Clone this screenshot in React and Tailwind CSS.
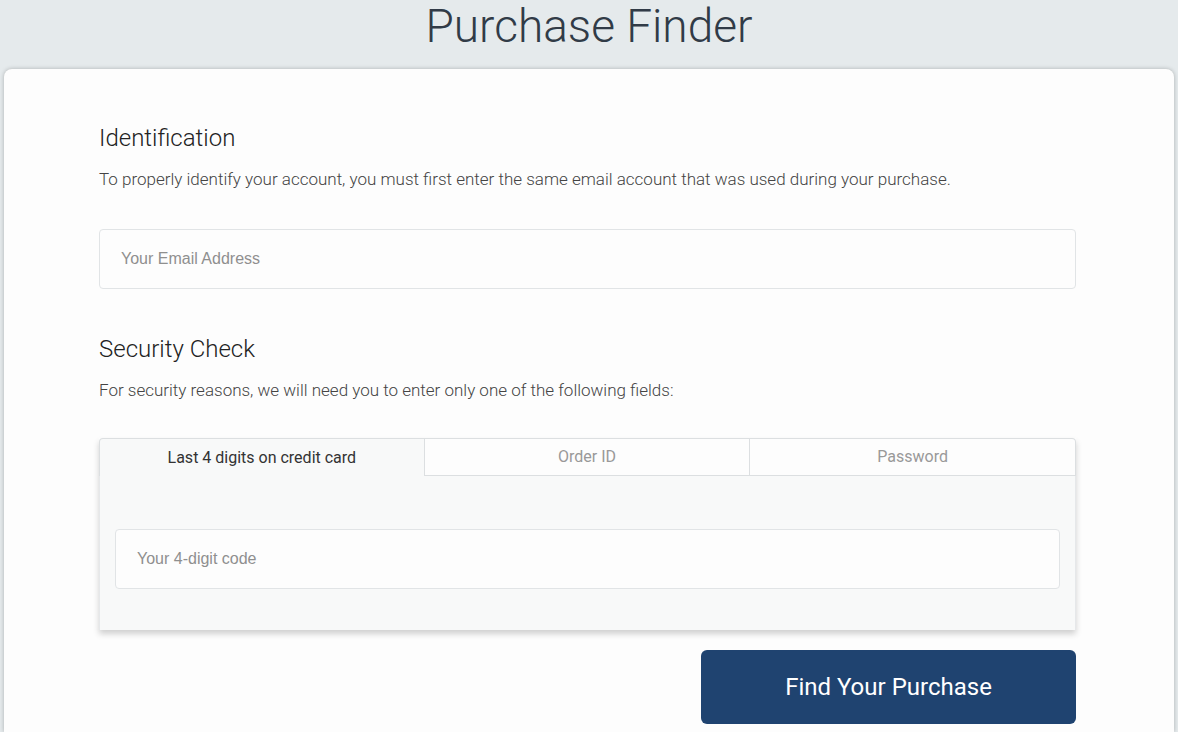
import React, { useState } from 'react';

const tabs = ['Last 4 digits on credit card', 'Order ID', 'Password'];

export default function App() {
  const [active, setActive] = useState(0);

  return (
    <div className="h-[732px] overflow-hidden bg-[#e5eaec] font-[Roboto,sans-serif] font-light text-[#2f3a44]">
      <h1 className="pt-[1px] text-center text-[46px] leading-[50px] font-light text-[#313b47]">Purchase Finder</h1>
      <div className="mx-[4px] mt-[18px] h-[663px] rounded-t-lg bg-[#fdfdfd] px-[95px] pt-[52px] shadow-[0_0_4px_rgba(0,0,0,0.25)]">
        <div className="w-[977px]">
          <h2 className="text-[24px] leading-[34px] font-light text-[#222]">Identification</h2>
          <p className="mt-[12px] text-[17px] leading-[24px] text-[#444]">
            To properly identify your account, you must first enter the same email account that was used during your purchase.
          </p>
          <input
            className="mt-[38px] h-[60px] w-full rounded border border-[#e1e4e6] bg-[#fdfdfd] px-[21px] font-[Liberation_Sans,sans-serif] text-[16px] font-normal outline-none placeholder:text-[#8f8f8f]"
            placeholder="Your Email Address"
          />
          <h2 className="mt-[43px] text-[24px] leading-[34px] font-light text-[#222]">Security Check</h2>
          <p className="mt-[12px] text-[17px] leading-[24px] text-[#444]">
            For security reasons, we will need you to enter only one of the following fields:
          </p>
          <div className="mt-[36px] shadow-[0_4px_6px_rgba(0,0,0,0.18)]">
            <div className="grid grid-cols-3">
              {tabs.map((t, i) => (
                <button
                  key={t}
                  onClick={() => setActive(i)}
                  className={`h-[38px] border border-[#dcdfe1] text-[16px] font-normal ${i > 0 ? 'border-l-0' : ''} ${
                    active === i ? 'border-b-0 bg-[#f8f9f9] text-[#333]' : 'bg-[#fdfdfd] text-[#999]'
                  } ${i === 0 ? 'rounded-tl' : ''} ${i === 2 ? 'rounded-tr' : ''}`}
                >
                  {t}
                </button>
              ))}
            </div>
            <div className="border-x border-[#e6e8ea] bg-[#f8f9f9] px-[15px] pt-[53px] pb-[41px]">
              <input
                className="h-[60px] w-full rounded border border-[#e1e4e6] bg-[#fdfdfd] px-[21px] font-[Liberation_Sans,sans-serif] text-[16px] font-normal outline-none placeholder:text-[#8f8f8f]"
                placeholder={active === 0 ? 'Your 4-digit code' : active === 1 ? 'Your Order ID' : 'Your Password'}
              />
            </div>
          </div>
          <div className="mt-[20px] flex justify-end">
            <button className="h-[74px] w-[375px] rounded-md bg-[#1f4370] text-[24px] font-normal text-white">
              Find Your Purchase
            </button>
          </div>
        </div>
      </div>
    </div>
  );
}
